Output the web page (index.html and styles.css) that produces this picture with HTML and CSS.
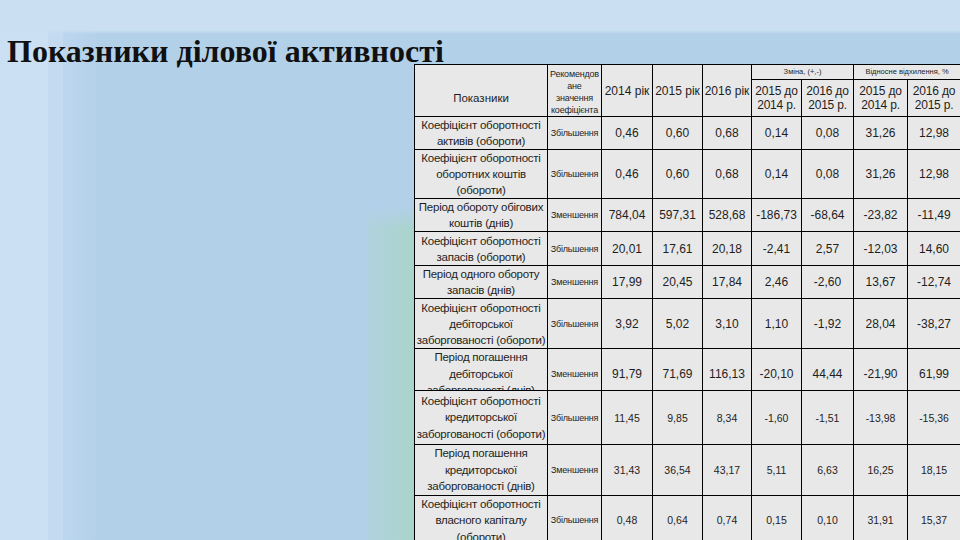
FILE: index.html
```html
<!DOCTYPE html>
<html lang="uk">
<head>
<meta charset="utf-8">
<title>Показники ділової активності</title>
<link rel="stylesheet" href="styles.css">
</head>
<body>
<div class="slide">
  <h1 class="title">Показники ділової активності</h1>
  <div class="table-wrap">
    <table class="grid">
      <colgroup>
        <col class="c-name"><col class="c-rec"><col class="c-y1"><col class="c-y2"><col class="c-y3"><col class="c-d1"><col class="c-d2"><col class="c-r1"><col class="c-r2">
      </colgroup>
      <tr class="h1">
        <td rowspan="2" class="hname">Показники</td>
        <td rowspan="2" class="small rec">Рекомендов<br>ане<br>значення<br>коефіцієнта</td>
        <td rowspan="2">2014 рік</td>
        <td rowspan="2">2015 рік</td>
        <td rowspan="2">2016 рік</td>
        <td colspan="2" class="tiny">Зміна, (+,-)</td>
        <td colspan="2" class="tiny">Відносне відхилення, %</td>
      </tr>
      <tr class="h2">
        <td>2015 до<br>2014 р.</td>
        <td>2016 до<br>2015 р.</td>
        <td>2015 до<br>2014 р.</td>
        <td>2016 до<br>2015 р.</td>
      </tr>
      <tr class="r33">
        <td class="name">Коефіцієнт оборотності<br>активів (обороти)</td>
        <td class="small">Збільшення</td>
        <td>0,46</td><td>0,60</td><td>0,68</td><td>0,14</td><td>0,08</td><td>31,26</td><td>12,98</td>
      </tr>
      <tr class="r49">
        <td class="name">Коефіцієнт оборотності<br>оборотних коштів<br>(обороти)</td>
        <td class="small">Збільшення</td>
        <td>0,46</td><td>0,60</td><td>0,68</td><td>0,14</td><td>0,08</td><td>31,26</td><td>12,98</td>
      </tr>
      <tr class="r33">
        <td class="name">Період обороту обігових<br>коштів (днів)</td>
        <td class="small">Зменшення</td>
        <td>784,04</td><td>597,31</td><td>528,68</td><td>-186,73</td><td>-68,64</td><td>-23,82</td><td>-11,49</td>
      </tr>
      <tr class="r34">
        <td class="name">Коефіцієнт оборотності<br>запасів (обороти)</td>
        <td class="small">Збільшення</td>
        <td>20,01</td><td>17,61</td><td>20,18</td><td>-2,41</td><td>2,57</td><td>-12,03</td><td>14,60</td>
      </tr>
      <tr class="r33">
        <td class="name">Період одного обороту<br>запасів (днів)</td>
        <td class="small">Зменшення</td>
        <td>17,99</td><td>20,45</td><td>17,84</td><td>2,46</td><td>-2,60</td><td>13,67</td><td>-12,74</td>
      </tr>
      <tr class="r50">
        <td class="name">Коефіцієнт оборотності<br>дебіторської<br>заборгованості (обороти)</td>
        <td class="small">Збільшення</td>
        <td>3,92</td><td>5,02</td><td>3,10</td><td>1,10</td><td>-1,92</td><td>28,04</td><td>-38,27</td>
      </tr>
      <tr class="r42">
        <td class="name"><div class="clip"><div class="clip-in">Період погашення<br>дебіторської<br>заборгованості (днів)</div></div></td>
        <td class="small"><div class="clip"><div class="clip-in">Зменшення</div></div></td>
        <td><div class="clip"><div class="clip-in">91,79</div></div></td>
        <td><div class="clip"><div class="clip-in">71,69</div></div></td>
        <td><div class="clip"><div class="clip-in">116,13</div></div></td>
        <td><div class="clip"><div class="clip-in">-20,10</div></div></td>
        <td><div class="clip"><div class="clip-in">44,44</div></div></td>
        <td><div class="clip"><div class="clip-in">-21,90</div></div></td>
        <td><div class="clip"><div class="clip-in">61,99</div></div></td>
      </tr>
      <tr class="r54 low">
        <td class="name">Коефіцієнт оборотності<br>кредиторської<br>заборгованості (обороти)</td>
        <td class="small">Збільшення</td>
        <td>11,45</td><td>9,85</td><td>8,34</td><td>-1,60</td><td>-1,51</td><td>-13,98</td><td>-15,36</td>
      </tr>
      <tr class="r50 low">
        <td class="name">Період погашення<br>кредиторської<br>заборгованості (днів)</td>
        <td class="small">Зменшення</td>
        <td>31,43</td><td>36,54</td><td>43,17</td><td>5,11</td><td>6,63</td><td>16,25</td><td>18,15</td>
      </tr>
      <tr class="r50 low">
        <td class="name">Коефіцієнт оборотності<br>власного капіталу<br>(обороти)</td>
        <td class="small">Збільшення</td>
        <td>0,48</td><td>0,64</td><td>0,74</td><td>0,15</td><td>0,10</td><td>31,91</td><td>15,37</td>
      </tr>
    </table>
  </div>
</div>
</body>
</html>
```

FILE: styles.css
```css
html, body {
  margin: 0;
  padding: 0;
}

body {
  width: 960px;
  height: 540px;
  overflow: hidden;
}

.slide {
  position: relative;
  width: 960px;
  height: 540px;
  overflow: hidden;
  box-sizing: border-box;
  padding-top: 38px;
  background:
    linear-gradient(to bottom, rgba(202, 223, 241, 1) 0px, rgba(202, 223, 241, 1) 30px, rgba(202, 223, 241, 0) 34px),
    linear-gradient(to right, #cbe0f2 0px, #cbe0f2 48px, #c3daf0 48px, #c3daf0 63px, #bcd6ee 63px, #b4d1ea 97px, rgba(180, 209, 234, 0) 98px),
    #b3d0e9;
}

.slide::before {
  content: "";
  position: absolute;
  left: 368px;
  top: 206px;
  width: 46px;
  height: 334px;
  background: linear-gradient(to right, rgba(174, 211, 214, 0.6), #a9d4cb);
  -webkit-mask-image: linear-gradient(to bottom, transparent 0px, #000 24px);
  mask-image: linear-gradient(to bottom, transparent 0px, #000 24px);
}

.title {
  position: relative;
  z-index: 2;
  margin: 0 0 0 7px;
  font-family: "Liberation Serif", "Times New Roman", serif;
  font-weight: bold;
  font-size: 32px;
  line-height: 26px;
  height: 26px;
  color: #111;
  white-space: nowrap;
}

.table-wrap {
  position: relative;
  z-index: 1;
  margin-left: 414px;
}

.grid {
  border-collapse: collapse;
  table-layout: fixed;
  width: 547px;
  background: #e8e8e8;
  font-family: "Liberation Sans", Arial, sans-serif;
  font-size: 12px;
  color: #1e1e1e;
}

.c-name { width: 133px; }
.c-rec { width: 54px; }
.c-y1 { width: 51px; }
.c-y2 { width: 50px; }
.c-y3 { width: 49px; }
.c-d1 { width: 50px; }
.c-d2 { width: 52px; }
.c-r1 { width: 54px; }
.c-r2 { width: 53px; }

.grid td {
  border: 1px solid #000;
  padding: 0;
  text-align: center;
  vertical-align: middle;
  line-height: 16px;
  white-space: nowrap;
  overflow: hidden;
}

.grid .name {
  font-size: 11.5px;
  letter-spacing: -0.25px;
}

.grid .small {
  font-size: 9px;
  line-height: 12px;
  letter-spacing: -0.2px;
}

.grid .rec {
  padding-top: 2px;
}

.grid .tiny {
  font-size: 7.5px;
  line-height: 10px;
}

.grid .hname {
  padding-top: 14px;
  font-size: 11.5px;
}

.h1 { height: 15px; }
.h2 { height: 37px; }
.r33 { height: 33px; }
.r34 { height: 34px; }
.r42 { height: 42px; }
.r49 { height: 49px; }
.r50 { height: 50px; }
.r54 { height: 54px; }

.h2 td {
  line-height: 14px;
  letter-spacing: -0.2px;
}

.low td {
  font-size: 10.5px;
}

.low td.name {
  font-size: 11.5px;
  line-height: 16.5px;
}

.low td.small {
  font-size: 9px;
}

.clip {
  height: 41px;
  overflow: hidden;
}

.clip-in {
  height: 50px;
  display: flex;
  align-items: center;
  justify-content: center;
  line-height: 16.5px;
}
```
